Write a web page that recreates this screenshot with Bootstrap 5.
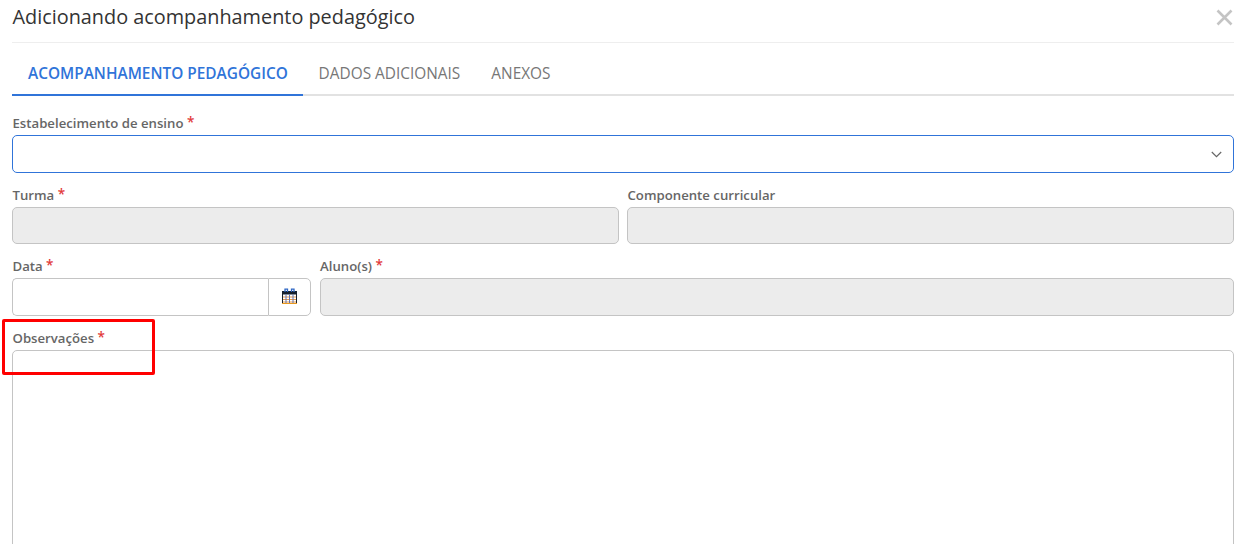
<!DOCTYPE html>
<html lang="pt-BR">
<head>
<meta charset="utf-8">
<title>Adicionando acompanhamento pedagógico</title>
<link href="https://cdn.jsdelivr.net/npm/bootstrap@5.3.0/dist/css/bootstrap.min.css" rel="stylesheet">
<style>
html, body { height: 544px; overflow: hidden; }
body { font-family: "Open Sans", "Noto Sans", sans-serif; background: #fff; color: #333; position: relative; }
.shell { padding: 0 10px 0 12px; }
.head-bar { height: 43px; border-bottom: 1px solid #eee; }
.head-title { font-size: 19.85px; font-weight: 400; line-height: 24px; margin: 0 0 0 .5px; color: #333; position: relative; top: -4px; }
.close-x { width: 17px; height: 17px; margin-right: 1px; position: relative; top: -4px; }
.tab-strip { margin-top: 10px; height: 43px; border-bottom: 2px solid #e2e2e2; flex-wrap: nowrap; }
.tab-item { height: 43px; padding: 0 15.5px; font-size: 15.4px; line-height: 41px; color: #777; text-transform: uppercase; text-decoration: none; white-space: nowrap; }
.tab-item.on { color: #3074d9; font-weight: 600; border-bottom: 2px solid #3074d9; padding: 0 15.3px 0 16px; }
.fld-label { display: block; font-size: 13.2px; font-weight: 600; color: #666; line-height: 14px; height: 16px; margin: 0 0 3px .5px; white-space: nowrap; }
.req { color: #e23a3a; font-size: 13.5px; line-height: 10px; position: relative; top: -1px; font-weight: 600; }
.fld { height: 38px; border: 1px solid #c4c4c4; border-radius: 5px; box-shadow: none; font-size: 13px; background-color: #fff; }
.fld.grayed { background: #ececec; height: 37px; }
.fld.tall { height: 38px; }
.fld.sel { border-color: #3074d9; background-image: none; }
.form-stack { padding-top: 20px; }
.row-gap { --bs-gutter-x: 8px; margin-top: 15px; }
.obs-wrap { margin-top: 15px; }
.sel-wrap { position: relative; }
.chev { position: absolute; right: 12px; top: 16px; width: 11px; height: 7px; }
.date-btn { width: 43px; background: #fff; border: 1px solid #c4c4c4; border-radius: 0 5px 5px 0; padding: 0 0 2px; }
.date-in { border-radius: 5px 0 0 5px; border-right: 0; min-width: 0; }
.date-col { width: 299px; }
.obs-area { height: 260px; border: 1px solid #c4c4c4; border-radius: 5px; resize: none; }
.note-box { position: absolute; left: 2px; top: 319px; width: 153px; height: 56px; border: 3px solid #f00; border-radius: 2px; pointer-events: none; }
</style>
</head>
<body>
<div class="shell">
  <div class="head-bar d-flex align-items-center justify-content-between">
    <h1 class="head-title">Adicionando acompanhamento pedagógico</h1>
    <svg class="close-x" viewBox="0 0 17 17" aria-label="Fechar"><path d="M1.5 1.5 15.5 15.5M15.5 1.5 1.5 15.5" stroke="#c4c4c4" stroke-width="2.6" fill="none"/></svg>
  </div>

  <nav class="tab-strip d-flex">
    <a class="tab-item on" href="#">Acompanhamento pedagógico</a>
    <a class="tab-item" href="#">Dados adicionais</a>
    <a class="tab-item" href="#">Anexos</a>
  </nav>

  <form class="form-stack">
    <label class="fld-label">Estabelecimento de ensino <span class="req">*</span></label>
    <div class="sel-wrap">
      <input class="form-control fld sel" type="text">
      <svg class="chev" viewBox="0 0 11 7"><path d="M.8 1 5.5 5.6 10.2 1" stroke="#666" stroke-width="1.2" fill="none"/></svg>
    </div>

    <div class="row row-gap">
      <div class="col-6">
        <label class="fld-label">Turma <span class="req">*</span></label>
        <input class="form-control fld grayed" type="text" disabled>
      </div>
      <div class="col-6">
        <label class="fld-label">Componente curricular</label>
        <input class="form-control fld grayed" type="text" disabled>
      </div>
    </div>

    <div class="row row-gap">
      <div class="col-3">
        <label class="fld-label">Data <span class="req">*</span></label>
        <div class="d-flex date-col">
          <input class="form-control fld date-in" type="text">
          <button class="date-btn flex-shrink-0 d-flex align-items-center justify-content-center" type="button" aria-label="Calendário">
            <svg width="15" height="16" viewBox="0 0 15 16">
              <rect x=".5" y="3.5" width="14" height="12" fill="#fff" stroke="#16202c"/>
              <rect x="0" y="3" width="15" height="3.5" fill="#16202c"/>
              <path d="M1 9H14M1 11.5H14M1 14H14" stroke="#e89a4a"/>
              <path d="M4 6.5V15M7.5 6.5V15M11 6.5V15" stroke="#5f74b5"/>
              <path d="M3 4V1.2H5.5V4M9.5 4V1.2H12V4" stroke="#2f67c4" stroke-width="1.3" fill="none"/>
              <path d="M0 15.5H15" stroke="#e89a20"/>
            </svg>
          </button>
        </div>
      </div>
      <div class="col-9">
        <label class="fld-label">Aluno(s) <span class="req">*</span></label>
        <input class="form-control fld grayed tall" type="text" disabled>
      </div>
    </div>

    <div class="obs-wrap">
      <label class="fld-label">Observações <span class="req">*</span></label>
      <textarea class="form-control obs-area"></textarea>
    </div>
  </form>
</div>
<div class="note-box"></div>
<script src="https://cdn.jsdelivr.net/npm/bootstrap@5.3.0/dist/js/bootstrap.bundle.min.js"></script>
</body>
</html>
